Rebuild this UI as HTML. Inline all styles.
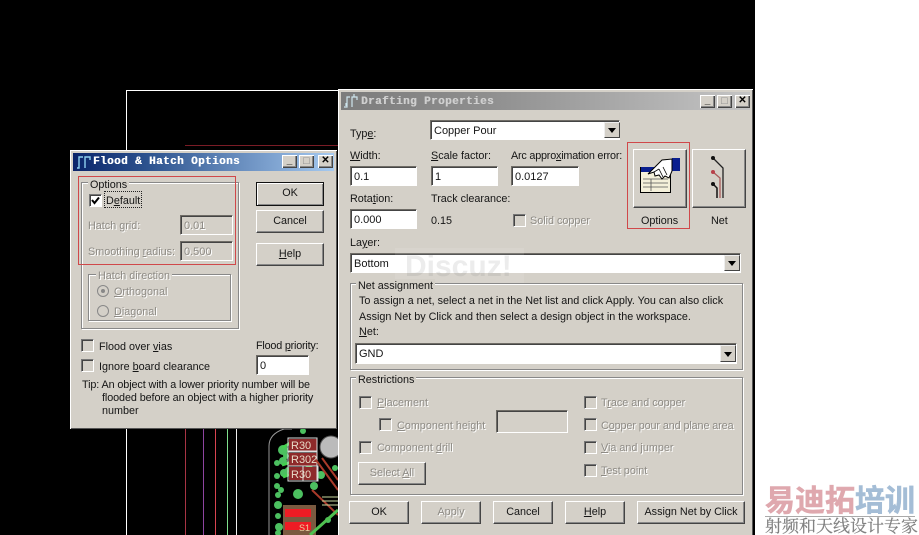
<!DOCTYPE html>
<html><head><meta charset="utf-8"><title>Drafting Properties</title>
<style>
html,body{margin:0;padding:0;background:#fff}
#p{position:relative;width:919px;height:535px;overflow:hidden;background:#fff;font:10.8px/14px "Liberation Sans",sans-serif;color:#151515}
#p div,#p svg{position:absolute}
.t{white-space:nowrap;height:14px;margin-top:1px}
.d{color:#8e8b85;text-shadow:1px 1px 0 #fff}
.dlg{background:#d4d0c8;box-shadow:inset 1px 1px 0 #fff,inset -1px -1px 0 #555,inset 2px 2px 0 #d4d0c8}
.tb{font:bold 11px/16px "Liberation Mono",monospace;letter-spacing:.4px;color:#fff;white-space:nowrap;text-shadow:.4px 0 0 currentColor;margin-top:1px}
.wb{width:15px;height:13px;background:#d4d0c8;box-shadow:inset 1px 1px 0 #fff,inset -1px -1px 0 #444,inset -2px -2px 0 #888;font:bold 10px/12px "Liberation Sans",sans-serif;text-align:center;color:#000}
.f{background:#fff;box-sizing:border-box;border:1px solid;border-color:#6f6c66 #fff #fff #6f6c66;box-shadow:inset 1px 1px 0 #444;padding:3px 0 0 3px;line-height:14px;font-size:11px}
.fd{background:#d4d0c8;color:#8e8b85;text-shadow:1px 1px 0 #fff}
.b{box-sizing:border-box;background:#d4d0c8;border:1px solid;border-color:#fff #444 #444 #fff;box-shadow:inset -1px -1px 0 #888;text-align:center;line-height:21px}
.g{box-sizing:border-box;border:1px solid #888;box-shadow:1px 1px 0 #fff,inset 1px 1px 0 #fff}
.l{background:#d4d0c8;padding:0 2px;height:14px;white-space:nowrap}
.c{box-sizing:border-box;width:13px;height:13px;background:#d4d0c8;border:1px solid;border-color:#777 #fff #fff #777;box-shadow:inset 1px 1px 0 #444}
.a{box-sizing:border-box;width:16px;background:#d4d0c8;border:1px solid;border-color:#eee #444 #444 #eee}
.a:after{content:"";position:absolute;left:3px;top:50%;margin-top:-2px;border:4px solid transparent;border-top:5px solid #000;border-bottom:0}
.r{border:1.5px solid #d0484a;box-sizing:border-box}
</style></head><body><div id="p">

<div style="left:0;top:0;width:755px;height:535px;background:#000"></div>
<div style="left:126px;top:90px;width:212px;height:1px;background:#fff"></div>
<div style="left:126px;top:90px;width:1px;height:445px;background:#fff"></div>
<div style="left:185px;top:145px;width:153px;height:1px;background:#7a1c26"></div>
<div style="left:185px;top:425px;width:1px;height:110px;background:#a83444"></div>
<div style="left:203px;top:425px;width:1px;height:110px;background:#8d44a0"></div>
<div style="left:215px;top:425px;width:1px;height:110px;background:#d84450"></div>
<div style="left:227px;top:425px;width:1px;height:110px;background:#7fe08c"></div>
<div style="left:236px;top:425px;width:1px;height:110px;background:#eee"></div>

<svg style="left:262px;top:425px" width="78" height="110" viewBox="262 425 78 110">
<path d="M292 429H284Q269 434 269 446V535" fill="none" stroke="#999" stroke-width="1"/>
<g fill="#4cc060">
<circle cx="283" cy="450" r="5"/><circle cx="277" cy="463" r="3"/><circle cx="283" cy="461" r="4"/><circle cx="277" cy="476" r="3"/><circle cx="284" cy="473" r="4"/><circle cx="277" cy="486" r="3"/><circle cx="278" cy="495" r="3"/><circle cx="281" cy="490" r="3"/><circle cx="298" cy="494" r="5"/><circle cx="314" cy="486" r="4"/><circle cx="321" cy="475" r="4"/><circle cx="278" cy="505" r="4"/><circle cx="278" cy="516" r="3"/><circle cx="279" cy="527" r="4"/><circle cx="303" cy="431" r="3"/><circle cx="335" cy="468" r="3"/><circle cx="328" cy="520" r="3"/><circle cx="288" cy="470" r="3"/><circle cx="286" cy="456" r="3"/><circle cx="278" cy="533" r="3"/>
</g>
<path d="M282 448L292 442M282 465L305 458M283 477L312 466" stroke="#44d050" stroke-width="3"/>
<g fill="#8e2a2a"><rect x="289" y="439" width="28" height="13"/><rect x="289" y="453" width="28" height="13"/><rect x="289" y="467" width="28" height="13"/></g>
<g fill="none" stroke="#ddd"><rect x="288" y="438" width="29" height="13"/><rect x="288" y="452" width="29" height="14"/><rect x="288" y="466" width="29" height="15"/><rect x="303" y="466" width="15" height="15"/></g>
<g font-family="Liberation Sans" font-size="11" fill="#e8dcc8"><text x="291" y="449">R30</text><text x="291" y="463">R302</text><text x="291" y="478">R30</text></g>
<circle cx="331" cy="447" r="11" fill="#bbb" stroke="#555"/>
<path d="M316 460L338 490M322 458L338 480M312 490L338 515" stroke="#a83a2a" stroke-width="2" fill="none"/>
<path d="M322 497H338M322 501H338M322 505H338" stroke="#c9d9a0"/>
<rect x="283" y="505" width="33" height="30" fill="#7a5a40"/>
<rect x="285" y="509" width="26" height="8" fill="#ee1c24"/><rect x="285" y="522" width="26" height="8" fill="#ee1c24"/>
<path d="M310 535L338 510" stroke="#4fc050" stroke-width="3"/>
<text x="299" y="531" fill="#e8d0a0" font-size="9" font-family="Liberation Sans">S1</text>
</svg>

<!-- Flood dialog -->
<div class="dlg" style="left:70px;top:150px;width:267px;height:279px"></div>
<div style="left:73px;top:153px;width:261px;height:18px;background:linear-gradient(90deg,#0a246a 0%,#2f5590 30%,#a6caf0 100%)"></div>
<svg style="left:76px;top:155px" width="16" height="14"><path d="M1 13H3V2H7M9 13V2H14V5" fill="none" stroke="#8fd0f0" stroke-width="1.4"/></svg>
<div class="tb" style="left:93px;top:153px">Flood &amp; Hatch Options</div>
<div class="wb" style="left:282px;top:155px">_</div>
<div class="wb" style="left:299px;top:155px;color:#888;font-size:11px">□</div>
<div class="wb" style="left:318px;top:155px">✕</div>

<div class="g" style="left:81px;top:182px;width:158px;height:147px"></div>
<div class="l t" style="left:88px;top:177px">Options</div>
<div class="c" style="left:89px;top:194px;background:#fff"></div>
<svg style="left:90px;top:195px" width="11" height="11"><path d="M2 5L4.5 8L9 2.5" fill="none" stroke="#000" stroke-width="2"/></svg>
<div class="t" style="left:106px;top:193px">D<u>e</u>fault</div>
<div style="left:105px;top:192px;width:36px;height:15px;outline:1px dotted #222"></div>
<div class="t d" style="left:88px;top:218px">Hatch <u>g</u>rid:</div>
<div class="f fd" style="left:180px;top:215px;width:53px;height:20px">0.01</div>
<div class="t d" style="left:88px;top:244px">Smoothing <u>r</u>adius:</div>
<div class="f fd" style="left:180px;top:241px;width:53px;height:20px">0.500</div>
<div class="g" style="left:88px;top:274px;width:143px;height:47px"></div>
<div class="l t d" style="left:96px;top:268px">Hatch direction</div>
<svg style="left:96px;top:284px" width="14" height="36"><circle cx="7" cy="7" r="5.5" fill="#d4d0c8" stroke="#888"/><circle cx="7" cy="7" r="2" fill="#888"/><circle cx="7" cy="27" r="5.5" fill="#d4d0c8" stroke="#888"/></svg>
<div class="t d" style="left:114px;top:284px"><u>O</u>rthogonal</div>
<div class="t d" style="left:114px;top:304px"><u>D</u>iagonal</div>

<div class="b" style="left:256px;top:182px;width:68px;height:24px;border-color:#111;box-shadow:inset 1px 1px 0 #fff,inset -1px -1px 0 #888">OK</div>
<div class="b" style="left:256px;top:210px;width:68px;height:23px">Cancel</div>
<div class="b" style="left:256px;top:243px;width:68px;height:23px"><u>H</u>elp</div>

<div class="c" style="left:81px;top:339px"></div>
<div class="t" style="left:99px;top:339px">Flood over <u>v</u>ias</div>
<div class="c" style="left:81px;top:359px"></div>
<div class="t" style="left:99px;top:359px">Ignore <u>b</u>oard clearance</div>
<div class="t" style="left:256px;top:338px;letter-spacing:-.2px">Flood <u>p</u>riority:</div>
<div class="f" style="left:256px;top:355px;width:53px;height:20px">0</div>
<div class="t" style="left:82px;top:377px;letter-spacing:-.1px">Tip: An object with a lower priority number will be</div>
<div class="t" style="left:102px;top:390px;letter-spacing:-.09px">flooded before an object with a higher priority</div>
<div class="t" style="left:102px;top:403px">number</div>
<div class="r" style="left:78px;top:176px;width:158px;height:89px"></div>

<!-- Drafting dialog -->
<div class="dlg" style="left:338px;top:89px;width:415px;height:450px"></div>
<div style="left:341px;top:92px;width:409px;height:18px;background:linear-gradient(90deg,#7c7c7c 0%,#8e8e8e 35%,#c4c4c4 100%)"></div>
<svg style="left:343px;top:94px" width="16" height="14"><path d="M1 13H4V3H7M9 13V3H14V6M3 12V9M11 3V0" fill="none" stroke="#cfe6ee" stroke-width="1.2"/></svg>
<div class="tb" style="left:361px;top:93px;color:#cfcfcf">Drafting Properties</div>
<div class="wb" style="left:700px;top:95px">_</div>
<div class="wb" style="left:717px;top:95px;color:#888;font-size:11px">□</div>
<div class="wb" style="left:735px;top:95px">✕</div>

<div class="t" style="left:350px;top:126px">Typ<u>e</u>:</div>
<div class="f" style="left:430px;top:120px;width:190px;height:20px">Copper Pour</div>
<div class="a" style="left:604px;top:122px;height:16px"></div>
<div class="t" style="left:350px;top:148px"><u>W</u>idth:</div>
<div class="t" style="left:431px;top:148px"><u>S</u>cale factor:</div>
<div class="t" style="left:511px;top:148px;letter-spacing:-.2px">Arc appro<u>x</u>imation error:</div>
<div class="f" style="left:350px;top:166px;width:67px;height:20px">0.1</div>
<div class="f" style="left:431px;top:166px;width:67px;height:20px">1</div>
<div class="f" style="left:511px;top:166px;width:68px;height:20px">0.0127</div>
<div class="t" style="left:350px;top:191px">Rota<u>t</u>ion:</div>
<div class="t" style="left:431px;top:191px">Track clearance:</div>
<div class="f" style="left:350px;top:209px;width:67px;height:20px">0.000</div>
<div class="t" style="left:431px;top:213px">0.15</div>
<div class="c" style="left:513px;top:214px"></div>
<div class="t d" style="left:530px;top:213px">Solid copper</div>

<div class="b" style="left:633px;top:149px;width:54px;height:59px"></div>
<div class="b" style="left:692px;top:149px;width:54px;height:59px"></div>
<svg style="left:640px;top:155px" width="42" height="40" viewBox="0 0 42 40">
<rect x="0.5" y="12.5" width="30" height="25" fill="#f4f0da" stroke="#000"/>
<rect x="1" y="12" width="29" height="5" fill="#0a1f8f"/>
<path d="M3 24H28M3 28H28M3 32H28M11 24V36" stroke="#555" stroke-width=".8"/>
<rect x="32" y="3" width="8" height="13" fill="#0a1f8f"/>
<path d="M8 19L22 5L32 4V16L29 23L25 21L22 24L19 20L15 21L14 17Z" fill="#fff" stroke="#000"/>
<path d="M19 14L23 22M23 12L27 20M14 17L19 14" stroke="#000" stroke-width=".8" fill="none"/>
</svg>
<svg style="left:705px;top:155px" width="30" height="46" viewBox="0 0 30 46">
<path d="M8 3L18 13V43" fill="none" stroke="#222" stroke-width="1.3"/>
<path d="M8 17L15 23V43" fill="none" stroke="#a85a5a" stroke-width="1.3"/>
<path d="M8 29L12 33V43" fill="none" stroke="#111" stroke-width="1.5"/>
<circle cx="8" cy="3" r="2" fill="#111"/><circle cx="8" cy="17" r="2" fill="#b8404a"/><circle cx="8" cy="29" r="2" fill="#111"/>
</svg>
<div class="t" style="left:641px;top:213px">Options</div>
<div class="t" style="left:711px;top:213px">Net</div>
<div class="r" style="left:627px;top:142px;width:63px;height:87px"></div>

<div class="t" style="left:350px;top:235px">La<u>y</u>er:</div>
<div class="f" style="left:350px;top:253px;width:391px;height:20px">Bottom</div>
<div class="a" style="left:724px;top:255px;height:16px"></div>
<div style="left:395px;top:248px;width:129px;height:37px;background:rgba(255,255,255,.1)"></div>
<div style="left:405px;top:249px;font:bold 30px/36px 'Liberation Sans',sans-serif;color:rgba(120,120,120,.14);white-space:nowrap">Discuz!</div>

<div class="g" style="left:350px;top:283px;width:393px;height:87px"></div>
<div class="l t" style="left:356px;top:278px">Net assignment</div>
<div class="t" style="left:359px;top:293px">To assign a net, select a net in the Net list and click Apply. You can also click</div>
<div class="t" style="left:359px;top:309px">Assign Net by Click and then select a design object in the workspace.</div>
<div class="t" style="left:359px;top:324px"><u>N</u>et:</div>
<div class="f" style="left:355px;top:343px;width:382px;height:21px">GND</div>
<div class="a" style="left:720px;top:345px;height:17px"></div>

<div class="g" style="left:350px;top:377px;width:393px;height:118px"></div>
<div class="l t" style="left:356px;top:372px">Restrictions</div>
<div class="c" style="left:359px;top:396px"></div><div class="t d" style="left:377px;top:395px"><u>P</u>lacement</div>
<div class="c" style="left:379px;top:418px"></div><div class="t d" style="left:397px;top:418px"><u>C</u>omponent height</div>
<div class="f fd" style="left:496px;top:410px;width:72px;height:23px"></div>
<div class="c" style="left:359px;top:441px"></div><div class="t d" style="left:377px;top:440px">Component <u>d</u>rill</div>
<div class="b d" style="left:358px;top:462px;width:68px;height:23px">Select <u>A</u>ll</div>
<div class="c" style="left:584px;top:396px"></div><div class="t d" style="left:601px;top:395px">T<u>r</u>ace and copper</div>
<div class="c" style="left:584px;top:418px"></div><div class="t d" style="left:601px;top:418px;letter-spacing:-.1px">C<u>o</u>pper pour and plane area</div>
<div class="c" style="left:584px;top:441px"></div><div class="t d" style="left:601px;top:440px"><u>V</u>ia and jumper</div>
<div class="c" style="left:584px;top:464px"></div><div class="t d" style="left:601px;top:463px"><u>T</u>est point</div>

<div class="b" style="left:349px;top:501px;width:60px;height:23px">OK</div>
<div class="b d" style="left:421px;top:501px;width:60px;height:23px">Apply</div>
<div class="b" style="left:493px;top:501px;width:60px;height:23px">Cancel</div>
<div class="b" style="left:565px;top:501px;width:60px;height:23px"><u>H</u>elp</div>
<div class="b" style="left:637px;top:501px;width:108px;height:23px">Assign Net by Click</div>

<!-- Logo -->
<div style="left:765px;top:478px;font:bold 30px/40px 'Noto Sans CJK SC',sans-serif;color:#dfa8ae;white-space:nowrap;-webkit-text-stroke:.6px currentColor">易迪拓<span style="color:#a4bdd6">培训</span></div>
<div style="left:765px;top:516px;width:150px;height:1px;background:#aaa"></div>
<div style="left:765px;top:515px;font:17px/20px 'Noto Serif CJK SC',serif;color:#808080;white-space:nowrap;-webkit-text-stroke:.2px currentColor">射频和天线设计专家</div>
</div></body></html>
